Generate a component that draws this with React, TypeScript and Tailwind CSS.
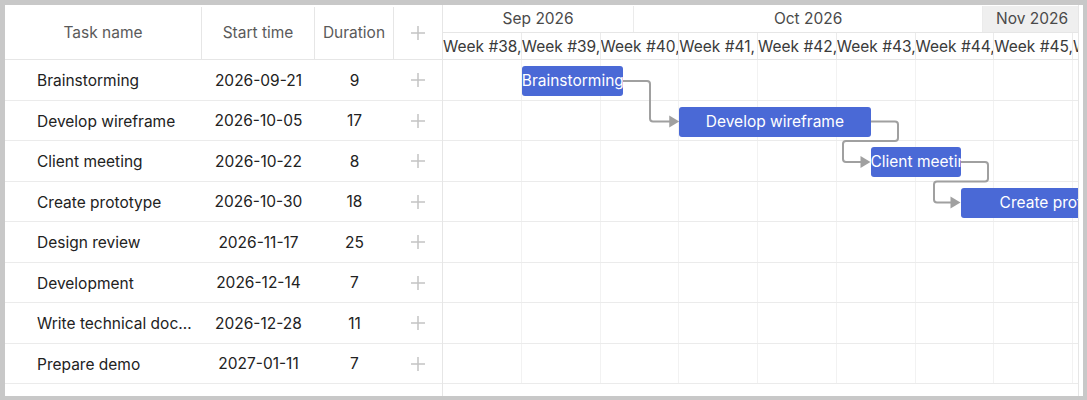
import React from 'react'

type Task = { name: string; start: string; duration: number }

const tasks: Task[] = [
  { name: 'Brainstorming', start: '2026-09-21', duration: 9 },
  { name: 'Develop wireframe', start: '2026-10-05', duration: 17 },
  { name: 'Client meeting', start: '2026-10-22', duration: 8 },
  { name: 'Create prototype', start: '2026-10-30', duration: 18 },
  { name: 'Design review', start: '2026-11-17', duration: 25 },
  { name: 'Development', start: '2026-12-14', duration: 7 },
  { name: 'Write technical documentation', start: '2026-12-28', duration: 11 },
  { name: 'Prepare demo', start: '2027-01-11', duration: 7 },
]

const weeks = [
  'Week #38, Sep 14',
  'Week #39, Sep 21',
  'Week #40, Sep 28',
  'Week #41, Oct 5',
  'Week #42, Oct 12',
  'Week #43, Oct 19',
  'Week #44, Oct 26',
  'Week #45, Nov 2',
  'Week #46, Nov 9',
]

const DAY = 11.25
const ROW = 40.5
const origin = new Date('2026-09-14T00:00:00Z').getTime()
const dayOf = (s: string) => Math.round((new Date(s + 'T00:00:00Z').getTime() - origin) / 86400000)

function PlusIcon() {
  return (
    <svg viewBox="0 0 16 16" className="h-4 w-4" fill="none" stroke="#c4c4c4" strokeWidth={1.5}>
      <path d="M8 1v14M1 8h14" />
    </svg>
  )
}

function Arrows() {
  const r = 3
  const links = [
    `M180 21 H${207 - r} Q207 21 207 ${21 + r} V${61.5 - r} Q207 61.5 ${207 + r} 61.5 H228`,
    `M427.5 61.5 H${455 - r} Q455 61.5 455 ${61.5 + r} V${81 - r} Q455 81 ${455 - r} 81 H${400 + r} Q400 81 400 ${81 + r} V${102 - r} Q400 102 ${400 + r} 102 H419`,
    `M517.5 102 H${545 - r} Q545 102 545 ${102 + r} V${121.5 - r} Q545 121.5 ${545 - r} 121.5 H${491 + r} Q491 121.5 491 ${121.5 + r} V${142.5 - r} Q491 142.5 ${491 + r} 142.5 H509`,
  ]
  const heads = [
    [236.25, 61.5],
    [427.5, 102],
    [517.5, 142.5],
  ]
  return (
    <svg className="pointer-events-none absolute left-0 top-0 h-[324px] w-[720px]" fill="none">
      {links.map((d, i) => (
        <path key={i} d={d} stroke="#a0a0a0" strokeWidth={2} />
      ))}
      {heads.map(([x, y], i) => (
        <polygon key={i} points={`${x},${y} ${x - 10},${y - 6} ${x - 10},${y + 6}`} fill="#a0a0a0" />
      ))}
    </svg>
  )
}

export default function App() {
  return (
    <div className="h-[400px] w-[1087px] bg-[#c8c8c8] pb-[4px] pl-[5px] pr-[4px] pt-[5px] font-['Inter',sans-serif] text-[15.5px]">
      <div className="flex h-full w-full overflow-hidden bg-white">
        {/* grid */}
        <div className="flex w-[438px] shrink-0 flex-col border-r border-[#e6e6e6]">
          <div className="flex h-[55px] border-b border-[#e6e6e6] pt-[2px] text-[#5a5a5a]">
            <div className="flex w-[197px] items-center justify-center border-r border-[#e6e6e6]">Task name</div>
            <div className="flex w-[113px] items-center justify-center border-r border-[#e6e6e6]">Start time</div>
            <div className="flex w-[79px] items-center justify-center border-r border-[#e6e6e6]">Duration</div>
            <div className="flex flex-1 items-center justify-center">
              <PlusIcon />
            </div>
          </div>
          {tasks.map((t) => (
            <div key={t.name} className="flex h-[40.5px] border-b border-[#ebebeb] pt-[1px] text-[#222]">
              <div className="w-[197px] truncate pl-[32px] pr-[3px] leading-[40px]">{t.name}</div>
              <div className="flex w-[113px] items-center justify-center">{t.start}</div>
              <div className="flex w-[79px] items-center justify-center">{t.duration}</div>
              <div className="flex flex-1 items-center justify-center">
                <PlusIcon />
              </div>
            </div>
          ))}
        </div>

        {/* chart */}
        <div className="flex w-[636px] shrink-0 flex-col overflow-hidden border-r border-[#e6e6e6]">
          <div className="flex h-[27px] pt-[1px] text-[#4a4a4a]">
            <div className="flex w-[191.25px] shrink-0 items-center justify-center border-r border-[#ebebeb]">Sep 2026</div>
            <div className="flex w-[348.75px] shrink-0 items-center justify-center border-r border-[#ebebeb]">Oct 2026</div>
            <div className="flex w-[168.75px] shrink-0 items-center justify-start bg-[#efefef] pl-[13px]">Nov 2026</div>
          </div>
          <div className="flex h-[28px] border-b border-t border-[#e6e6e6] text-[#3a3a3a]">
            {weeks.map((w) => (
              <div
                key={w}
                className="w-[78.75px] shrink-0 overflow-hidden whitespace-nowrap border-r border-[#ebebeb] leading-[27px]"
              >
                {w}
              </div>
            ))}
          </div>
          <div className="relative">
            {tasks.map((t) => (
              <div key={t.name} className="flex h-[40.5px] border-b border-[#ebebeb]">
                {weeks.map((w) => (
                  <div key={w} className="w-[78.75px] shrink-0 border-r border-[#f2f2f2]" />
                ))}
              </div>
            ))}
            <Arrows />
            {tasks.map((t, i) => (
              <div
                key={t.name}
                className="absolute h-[30px] overflow-hidden whitespace-nowrap rounded-[3px] bg-[#4a69d6] text-center leading-[30px] text-white"
                style={{ left: dayOf(t.start) * DAY, width: t.duration * DAY, top: i * ROW + 6 }}
              >
                {t.name}
              </div>
            ))}
          </div>
        </div>
      </div>
    </div>
  )
}
